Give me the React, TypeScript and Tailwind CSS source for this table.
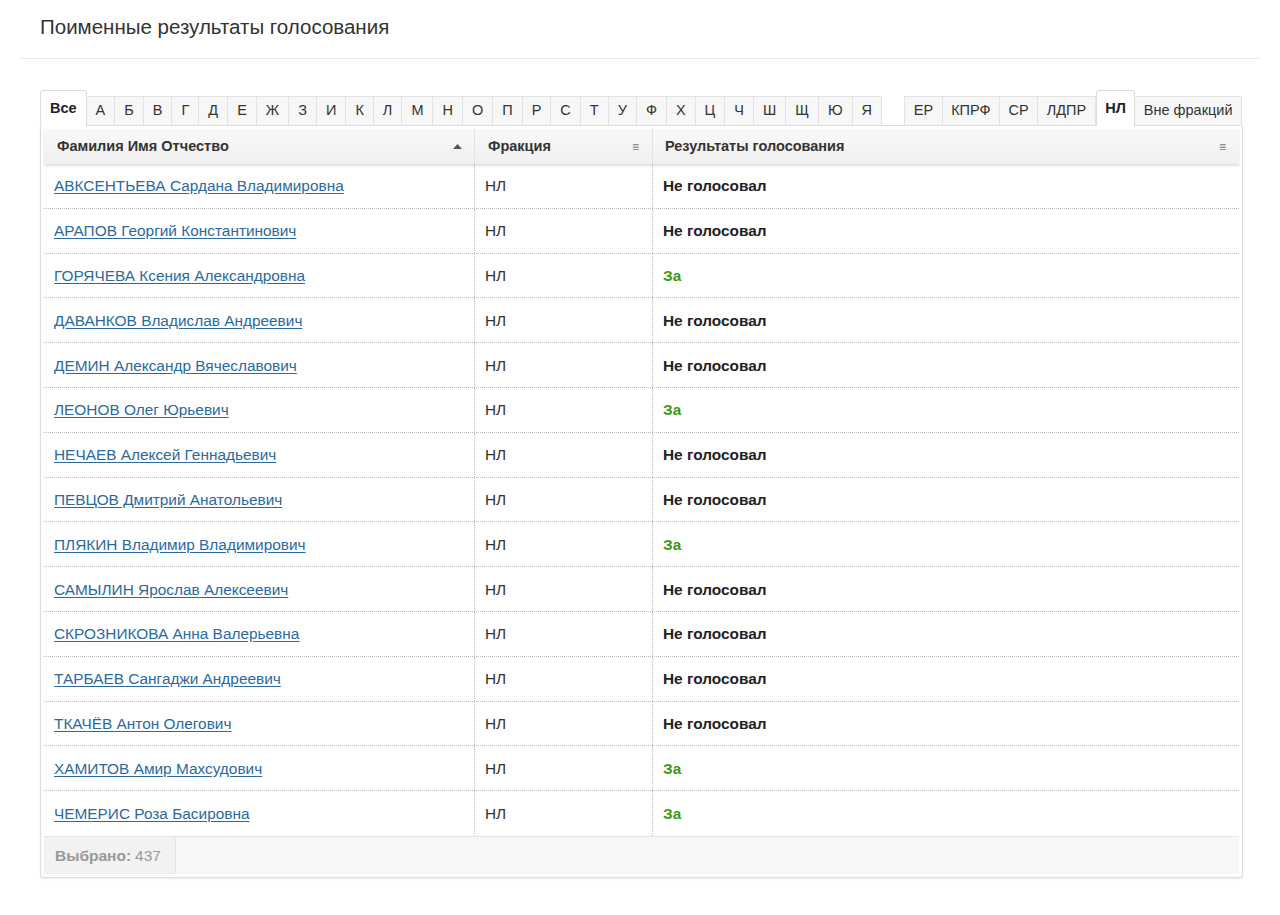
const LETTERS = ['А','Б','В','Г','Д','Е','Ж','З','И','К','Л','М','Н','О','П','Р','С','Т','У','Ф','Х','Ц','Ч','Ш','Щ','Ю','Я']
const FRACTIONS = ['ЕР', 'КПРФ', 'СР', 'ЛДПР', 'НЛ', 'Вне фракций']

const ROWS: [string, string][] = [
  ['АВКСЕНТЬЕВА Сардана Владимировна', 'Не голосовал'],
  ['АРАПОВ Георгий Константинович', 'Не голосовал'],
  ['ГОРЯЧЕВА Ксения Александровна', 'За'],
  ['ДАВАНКОВ Владислав Андреевич', 'Не голосовал'],
  ['ДЕМИН Александр Вячеславович', 'Не голосовал'],
  ['ЛЕОНОВ Олег Юрьевич', 'За'],
  ['НЕЧАЕВ Алексей Геннадьевич', 'Не голосовал'],
  ['ПЕВЦОВ Дмитрий Анатольевич', 'Не голосовал'],
  ['ПЛЯКИН Владимир Владимирович', 'За'],
  ['САМЫЛИН Ярослав Алексеевич', 'Не голосовал'],
  ['СКРОЗНИКОВА Анна Валерьевна', 'Не голосовал'],
  ['ТАРБАЕВ Сангаджи Андреевич', 'Не голосовал'],
  ['ТКАЧЁВ Антон Олегович', 'Не голосовал'],
  ['ХАМИТОВ Амир Махсудович', 'За'],
  ['ЧЕМЕРИС Роза Басировна', 'За'],
]

function Tab({ label, active, narrow }: { label: string; active?: boolean; narrow?: boolean }) {
  const pad = narrow ? 'px-[8.5px]' : 'px-[9px]'
  if (active) {
    return (
      <div className={`relative z-10 -mb-px flex h-[36px] items-center rounded-t-[3px] border border-b-0 border-[#ddd] bg-white ${pad} text-[14.5px] font-bold text-[#222]`}>
        {label}
      </div>
    )
  }
  return (
    <div className={`flex h-[29px] items-center border border-b-0 border-l-0 border-[#e3e3e3] bg-[#f7f7f7] ${pad} text-[14.5px] text-[#333] first:border-l`}>
      {label}
    </div>
  )
}

export default function App() {
  return (
    <div className="min-h-[915px] bg-white font-['Liberation_Sans',Arial,sans-serif] text-[#333]">
      <div className="px-[20px]">
        <h1 className="flex h-[59px] items-center border-b border-[#eaeaea] pb-[4px] pl-[20px] text-[20.5px] font-normal text-[#333]">
          Поименные результаты голосования
        </h1>
      </div>

      <div className="pl-[40px] pr-[37px] pt-[31px]">
        {/* tabs */}
        <div className="flex items-end justify-between pr-[1px]">
          <div className="flex items-end">
            <Tab label="Все" active />
            {LETTERS.map(l => (
              <Tab key={l} label={l} />
            ))}
          </div>
          <div className="flex items-end">
            {FRACTIONS.map(f => (
              <Tab key={f} label={f} active={f === 'НЛ'} narrow />
            ))}
          </div>
        </div>

        {/* panel */}
        <div className="rounded-[3px] border border-[#ddd] bg-white p-[3px] shadow-[0_1px_2px_rgba(0,0,0,0.08)]">
          <div className="flex h-[35px] items-center bg-gradient-to-b from-[#f9f9f9] to-[#f0f0f0] text-[14.5px] font-bold text-[#333] shadow-[0_2px_2px_rgba(0,0,0,0.12)]">
            <div className="flex h-full w-[431px] items-center justify-between border-r border-[#e2e2e2] pl-[13px] pr-[12px]">
              <span>Фамилия Имя Отчество</span>
              <svg width="9" height="5" viewBox="0 0 9 5"><path d="M0 5 L4.5 0 L9 5 Z" fill="#555" /></svg>
            </div>
            <div className="flex h-full w-[178px] items-center justify-between border-r border-[#e2e2e2] pl-[13px] pr-[13px]">
              <span>Фракция</span>
              <span className="text-[12px] font-normal text-[#777]">≡</span>
            </div>
            <div className="flex h-full flex-1 items-center justify-between pl-[12px] pr-[13px]">
              <span>Результаты голосования</span>
              <span className="text-[12px] font-normal text-[#777]">≡</span>
            </div>
          </div>

          <div>
            {ROWS.map(([name, result], i) => (
              <div
                key={name}
                className={`flex h-[44.8px] text-[15.4px] ${i < ROWS.length - 1 ? 'border-b border-dotted border-[#bbb]' : ''}`}
              >
                <div className="flex w-[431px] items-center border-r border-dotted border-[#bbb] pl-[10px]">
                  <a href="#" className="text-[#2a6a9e] underline underline-offset-2">
                    {name}
                  </a>
                </div>
                <div className="flex w-[178px] items-center border-r border-dotted border-[#bbb] pl-[10px] text-[#333]">
                  НЛ
                </div>
                <div
                  className={`flex flex-1 items-center pl-[10px] font-bold ${result === 'За' ? 'text-[#3c9a17]' : 'text-[#222]'}`}
                >
                  {result}
                </div>
              </div>
            ))}
          </div>

          <div className="flex h-[38px] border-t border-[#e6e6e6] bg-[#f7f7f7]">
            <div className="flex items-center border-r border-[#e6e6e6] bg-[#f2f2f2] pl-[11px] pr-[14px] text-[15.5px] text-[#999]">
              <span className="font-bold">Выбрано:</span>
              <span className="ml-[4px]">437</span>
            </div>
          </div>
        </div>
      </div>
    </div>
  )
}
